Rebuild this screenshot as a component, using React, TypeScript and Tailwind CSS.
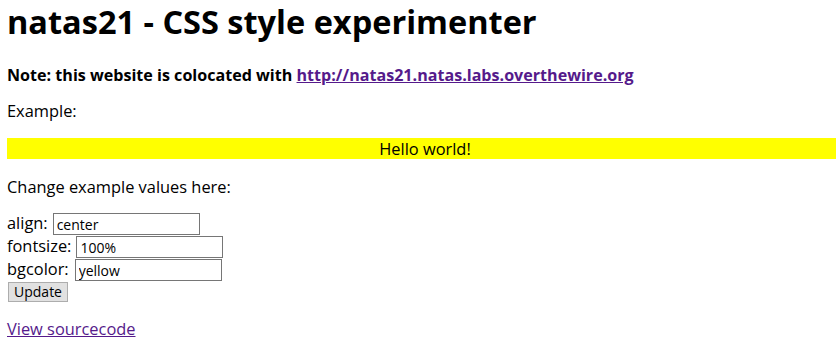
import { useState } from 'react';

const inputFont = { fontFamily: '"Open Sans", sans-serif' };

export default function App() {
  const [align, setAlign] = useState('center');
  const [fontsize, setFontsize] = useState('100%');
  const [bgcolor, setBgcolor] = useState('yellow');

  return (
    <div className="pl-[7px] text-black bg-white min-h-[349px] overflow-hidden font-['Open_Sans',sans-serif]">
      <h1 className="text-[32.5px] leading-[44px] font-bold">natas21 - CSS style experimenter</h1>

      <p className="mt-[20px] text-[16.1px] leading-[22px] font-bold">
        Note: this website is colocated with{' '}
        <a href="#" className="text-[#551a8b] underline">
          http://natas21.natas.labs.overthewire.org
        </a>
      </p>

      <p className="mt-[14px] text-[16.4px] leading-[22px]">Example:</p>

      <div className="mt-[16px] -mr-[7px] h-[21px] bg-[#ffff00] text-center text-[16.4px] leading-[21px]">
        Hello world!
      </div>

      <p className="mt-[17px] text-[16.4px] leading-[22px]">Change example values here:</p>

      <form className="mt-[15px] text-[16.4px]" onSubmit={(e) => e.preventDefault()}>
        <div className="flex items-start h-[23px]">
          <span className="leading-[19px]">align:</span>
          <input
            value={align}
            onChange={(e) => setAlign(e.target.value)}
            className="ml-[5px] w-[147px] h-[22px] border border-[#767676] px-[3px] text-[14px] outline-none"
            style={inputFont}
          />
        </div>
        <div className="flex items-start h-[23px]">
          <span className="leading-[19px]">fontsize:</span>
          <input
            value={fontsize}
            onChange={(e) => setFontsize(e.target.value)}
            className="ml-[5px] w-[147px] h-[22px] border border-[#767676] px-[3px] text-[14px] outline-none"
            style={inputFont}
          />
        </div>
        <div className="flex items-start h-[23px]">
          <span className="leading-[19px]">bgcolor:</span>
          <input
            value={bgcolor}
            onChange={(e) => setBgcolor(e.target.value)}
            className="ml-[6px] w-[147px] h-[22px] border border-[#767676] px-[3px] text-[14px] outline-none"
            style={inputFont}
          />
        </div>
        <button
          type="submit"
          className="block ml-[1px] w-[60px] h-[20px] bg-[#e1e1e1] border border-[#adadad] text-[14px] leading-[18px]"
        >
          Update
        </button>
      </form>

      <p className="mt-[16px] text-[16.4px] leading-[22px]">
        <a href="#" className="text-[#551a8b] underline">View sourcecode</a>
      </p>
    </div>
  );
}
